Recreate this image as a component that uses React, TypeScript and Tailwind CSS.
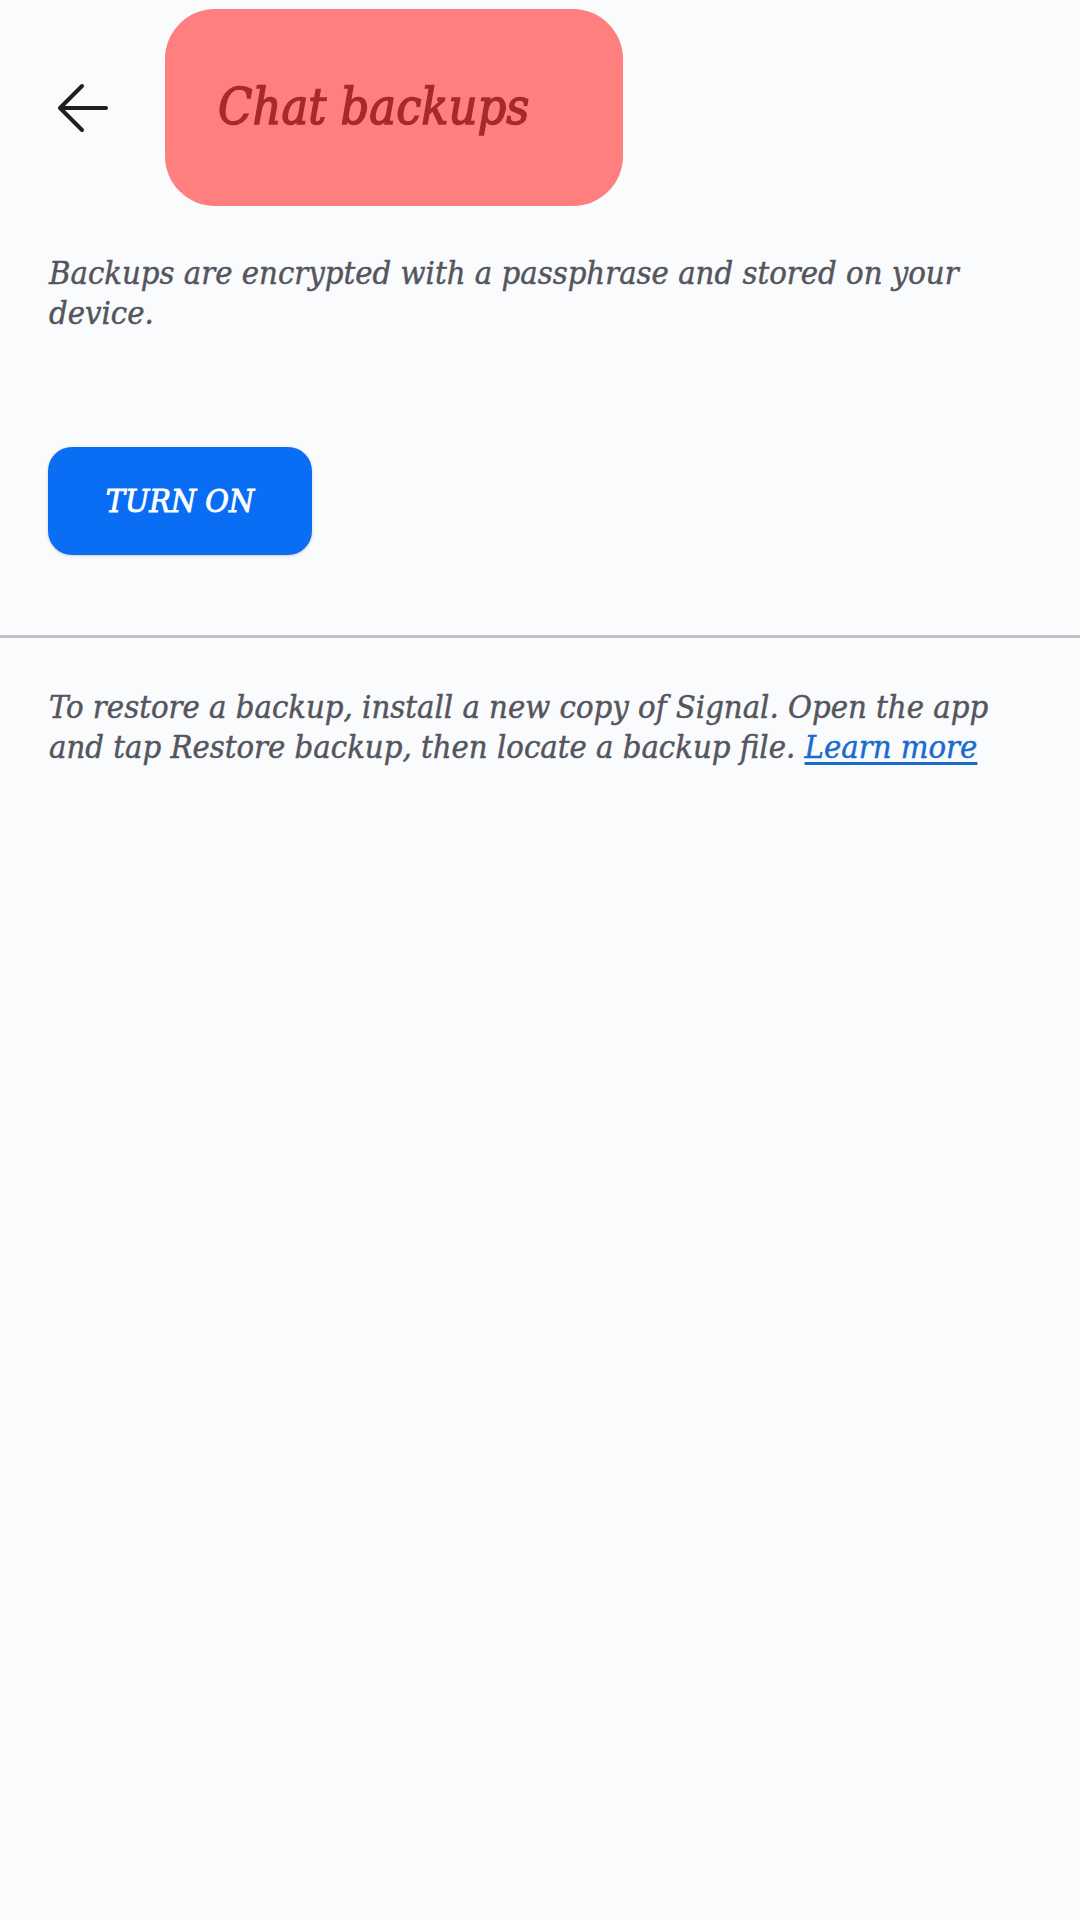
import React from "react";

const serif = { fontFamily: '"DejaVu Serif Condensed", "DejaVu Serif", serif', fontStretch: "condensed" as const };

function BackArrow() {
  return (
    <svg width="52" height="50" viewBox="0 0 52 50" fill="none" stroke="#1f1f22" strokeWidth="4" strokeLinecap="round" strokeLinejoin="round">
      <path d="M49 25H5" />
      <path d="M25 3L3 25l22 22" />
    </svg>
  );
}

export default function App() {
  return (
    <div className="min-h-[1920px] w-[1080px] bg-[#fafbfd] italic" style={serif}>
      <header className="flex items-center pt-[9px]">
        <button className="ml-[57px] flex h-[52px] w-[52px] items-center justify-center">
          <BackArrow />
        </button>
        <div className="ml-[56px] flex h-[197px] w-[458px] items-center rounded-[50px] bg-[#ff7f7f] pl-[53px]">
          <h1 className="text-[50px] font-normal text-[#a52a2c] [-webkit-text-stroke:1.4px_#a52a2c]">Chat backups</h1>
        </div>
      </header>

      <p className="mt-[47px] px-[49px] text-[32.5px] leading-[40px] text-[#54555d] [-webkit-text-stroke:0.45px_#54555d]">
        Backups are encrypted with a passphrase and stored on your device.
      </p>

      <div className="mt-[114px] px-[48px]">
        <button className="flex h-[108px] w-[264px] items-center justify-center rounded-[24px] bg-[#0a6ef5] text-[32px] font-normal text-white shadow-[0_1px_3px_rgba(0,0,0,0.18)] [-webkit-text-stroke:0.9px_#ffffff]">
          TURN ON
        </button>
      </div>

      <div className="mt-[80px] h-[3px] w-full bg-[#c2c3c6]" />

      <p className="mt-[49px] px-[49px] text-[32.5px] leading-[40px] text-[#54555d] [-webkit-text-stroke:0.45px_#54555d]">
        To restore a backup, install a new copy of Signal. Open the app and tap Restore backup, then locate a backup file.{" "}
        <a className="text-[#1a6bd0] underline underline-offset-4 [-webkit-text-stroke:0.45px_#1a6bd0]">Learn more</a>
      </p>
    </div>
  );
}
